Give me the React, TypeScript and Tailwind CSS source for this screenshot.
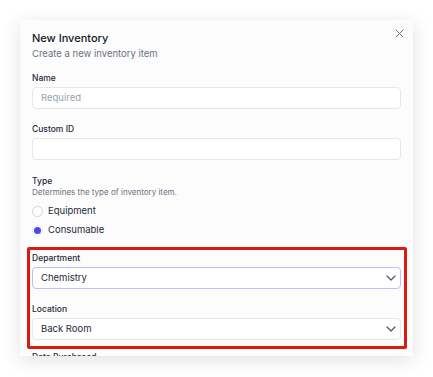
import React from "react";

const Chevron = () => (
  <svg width="10" height="6" viewBox="0 0 10 6" fill="none" className="text-gray-600">
    <path d="M1 1l4 4 4-4" stroke="currentColor" strokeWidth="1.2" strokeLinecap="round" strokeLinejoin="round" />
  </svg>
);

const Label = ({ children, className = "" }: { children: React.ReactNode; className?: string }) => (
  <div className={`text-[8.5px] leading-[12px] font-medium text-gray-800 ${className}`}>{children}</div>
);

const Radio = ({ label, checked, className = "" }: { label: string; checked?: boolean; className?: string }) => (
  <div className={`flex h-[14px] items-center gap-[5px] ${className}`}>
    {checked ? (
      <span className="flex h-[11px] w-[11px] items-center justify-center rounded-full border border-gray-200 bg-white">
        <span className="h-[7px] w-[7px] rounded-full bg-[#4f46e5]" />
      </span>
    ) : (
      <span className="h-[11px] w-[11px] rounded-full border border-gray-300 bg-white" />
    )}
    <span className="text-[9.5px] text-gray-800">{label}</span>
  </div>
);

const Select = ({ value, focused }: { value: string; focused?: boolean }) => (
  <div
    className={`mt-[3px] flex h-[22px] items-center justify-between rounded-[4px] border bg-white pl-[8px] pr-[4px] ${
      focused ? "border-[#b9c0fa]" : "border-gray-200"
    }`}
  >
    <span className="text-[9.5px] text-gray-800">{value}</span>
    <Chevron />
  </div>
);

export default function App() {
  return (
    <div className="h-[377px] w-[433px] overflow-hidden bg-white px-[20px] pt-[20px]" style={{ fontFamily: "Inter, 'Noto Sans', sans-serif" }}>
      <div className="relative h-[336px] w-[393px] overflow-hidden bg-[#fcfcfc] shadow-[0_4px_18px_rgba(0,0,0,0.12)]">
        <button className="absolute right-[9px] top-[9px] text-gray-500">
          <svg width="9" height="9" viewBox="0 0 9 9" fill="none">
            <path d="M1 1l7 7M8 1L1 8" stroke="currentColor" strokeWidth="1" strokeLinecap="round" />
          </svg>
        </button>
        <div className="flex flex-col px-[12px] pt-[10px]">
          <h2 className="text-[11px] leading-[16px] font-medium text-gray-900">New Inventory</h2>
          <p className="mt-[1px] text-[9.5px] leading-[14px] text-gray-500">Create a new inventory item</p>

          <Label className="mt-[11px]">Name</Label>
          <div className="mt-[3px] flex h-[22px] items-center rounded-[4px] border border-gray-200 bg-white px-[8px]">
            <span className="text-[9.5px] text-gray-400">Required</span>
          </div>

          <Label className="mt-[14px]">Custom ID</Label>
          <div className="mt-[3px] h-[22px] rounded-[4px] border border-gray-200 bg-white" />

          <Label className="mt-[15px]">Type</Label>
          <p className="text-[8px] leading-[11px] text-gray-500">Determines the type of inventory item.</p>
          <Radio label="Equipment" className="mt-[6px]" />
          <Radio label="Consumable" checked className="mt-[5px]" />

          <Label className="mt-[15px]">Department</Label>
          <Select value="Chemistry" focused />

          <Label className="mt-[14px]">Location</Label>
          <Select value="Back Room" />

          <Label className="mt-[11px] text-gray-400">Date Purchased</Label>
        </div>
        <div className="pointer-events-none absolute left-[7px] top-[227px] h-[102px] w-[380px] rounded-[2px] border-[3px] border-[#dd1a10]" />
      </div>
    </div>
  );
}
